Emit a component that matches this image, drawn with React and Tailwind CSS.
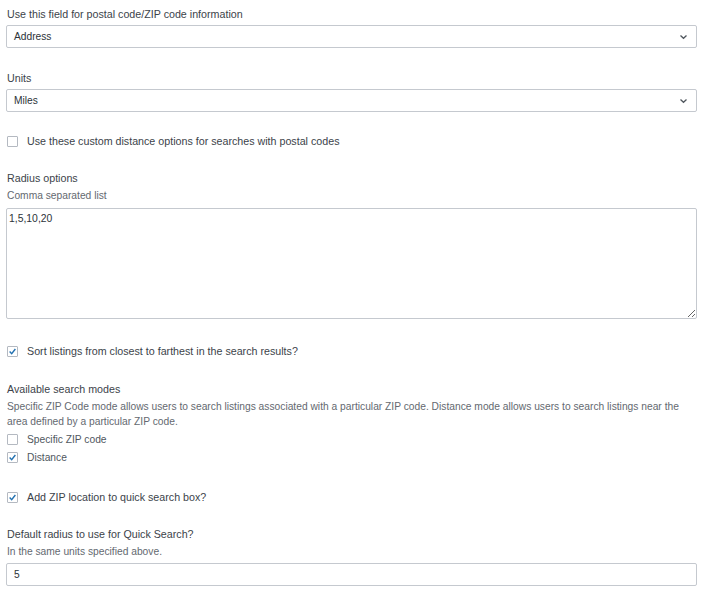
import React, { useState } from "react";

const Check = ({ checked }) => (
  <span className="flex h-[11px] w-[11px] shrink-0 items-center justify-center rounded-[1px] border border-[#b4b9c1] bg-white">
    {checked && (
      <svg width="11" height="11" viewBox="0 0 11 11" className="-mt-[1px]">
        <path d="M2 5.6 L4.5 8.2 L9 2.4" fill="none" stroke="#2271b1" strokeWidth="1.7" />
      </svg>
    )}
  </span>
);

const CheckRow = ({ checked, label, className = "" }) => (
  <label className={"flex h-[15px] items-center gap-[9px] pl-[7px] " + className}>
    <Check checked={checked} />
    <span>{label}</span>
  </label>
);

const Select = ({ value }) => (
  <div className="flex h-[23px] items-center justify-between rounded-[2px] border border-[#c5c9cf] bg-white pl-[7px] pr-[8px] text-[10.2px] text-[#2c3338]">
    <span>{value}</span>
    <svg width="9" height="6" viewBox="0 0 9 6">
      <path d="M1.5 1.5 L4.5 4.3 L7.5 1.5" fill="none" stroke="#50575e" strokeWidth="1.3" />
    </svg>
  </div>
);

export default function App() {
  const [radius] = useState("1,5,10,20");

  return (
    <div
      className="min-h-screen w-[706px] bg-white pl-[6px] pr-[9px] pt-[7px] text-[10.7px] leading-[15px] text-[#3c434a]"
      style={{ fontFamily: '"Liberation Sans", Arial, sans-serif' }}
    >
      {/* postal field */}
      <div className="pl-[1px]">Use this field for postal code/ZIP code information</div>
      <div className="mt-[3px]">
        <Select value="Address" />
      </div>

      {/* units */}
      <div className="mt-[23px] pl-[1px]">Units</div>
      <div className="mt-[3px]">
        <Select value="Miles" />
      </div>

      <CheckRow className="mt-[22px] -ml-[6px]" label="Use these custom distance options for searches with postal codes" />

      {/* radius */}
      <div className="mt-[22px] pl-[1px]">Radius options</div>
      <div className="mt-[2px] pl-[1px] text-[10.25px] text-[#646970]">Comma separated list</div>
      <textarea
        defaultValue={radius}
        className="mt-[5px] block h-[111px] w-full resize-y rounded-[2px] border border-[#c5c9cf] bg-white px-[2px] py-[2px] text-[10.4px] text-[#2c3338] outline-none"
      />

      <CheckRow checked className="mt-[25px] -ml-[6px]" label="Sort listings from closest to farthest in the search results?" />

      {/* search modes */}
      <div className="mt-[23px] pl-[1px]">Available search modes</div>
      <p className="mt-[2px] pl-[1px] text-[10.25px] text-[#646970]">
        Specific ZIP Code mode allows users to search listings associated with a particular ZIP code. Distance mode allows users to search listings near the area defined by a particular ZIP code.
      </p>
      <div className="text-[10.25px] text-[#50575e]">
        <CheckRow className="mt-[3px] -ml-[6px]" label="Specific ZIP code" />
        <CheckRow checked className="mt-[3px] -ml-[6px]" label="Distance" />
      </div>

      <CheckRow checked className="mt-[25px] -ml-[6px]" label="Add ZIP location to quick search box?" />

      {/* quick search */}
      <div className="mt-[22px] pl-[1px]">Default radius to use for Quick Search?</div>
      <div className="mt-[2px] pl-[1px] text-[10.25px] text-[#646970]">In the same units specified above.</div>
      <input
        defaultValue="5"
        className="mt-[4px] block h-[23px] w-full rounded-[2px] border border-[#c5c9cf] bg-white px-[7px] text-[10.2px] text-[#2c3338] outline-none"
      />
    </div>
  );
}
